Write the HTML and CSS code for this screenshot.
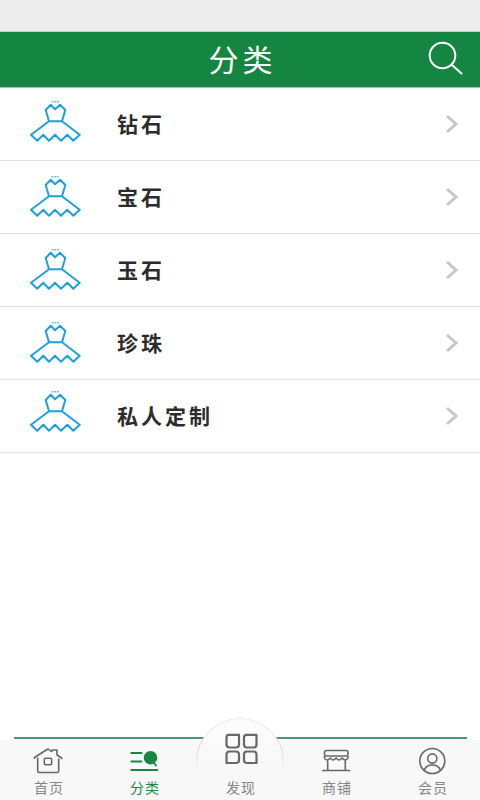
FILE: index.html
```
<!DOCTYPE html>
<html lang="zh-CN">
<head>
<meta charset="utf-8">
<title>分类</title>
<link rel="stylesheet" href="styles.css">
</head>
<body>
<svg width="0" height="0" class="defs">
  <symbol id="dress" viewBox="29 99 52 44"><path d="M49 121.3 45.7 110l5-5.3 4.3 4.6 5-4.6 5.3 5.3-3.3 11.3zL31 134.7l6.3 6 6-6 5.7 6 6-6 6 6 6.3-6 6 6 6.4-6L62 121.3"/><path class="beads" d="M51.5 101.800h7.500"/></symbol>
  <symbol id="chevron" viewBox="0 0 14 20"><path d="m2 2 9 8-9 8"/></symbol>
</svg>
<div class="app">
  <div class="status"></div>
  <header class="header">
    <h1>分类</h1>
    <svg class="search" viewBox="428 40 36 36"><circle cx="442.500" cy="55.500" r="12.800"/><path d="m451.500 64.500 10 9"/></svg>
  </header>
  <main class="list">
    <a class="row first"><svg class="dress"><use href="#dress"/></svg><span>钻石</span><svg class="chevron"><use href="#chevron"/></svg></a>
    <a class="row"><svg class="dress"><use href="#dress"/></svg><span>宝石</span><svg class="chevron"><use href="#chevron"/></svg></a>
    <a class="row"><svg class="dress"><use href="#dress"/></svg><span>玉石</span><svg class="chevron"><use href="#chevron"/></svg></a>
    <a class="row"><svg class="dress"><use href="#dress"/></svg><span>珍珠</span><svg class="chevron"><use href="#chevron"/></svg></a>
    <a class="row last"><svg class="dress"><use href="#dress"/></svg><span>私人定制</span><svg class="chevron"><use href="#chevron"/></svg></a>
  </main>
  <nav class="tabs">
    <div class="disc"></div>
    <a class="tab"><svg viewBox="32 745 32 32"><path d="M37.700 757.500V771q0 1.500 1.500 1.500h18q1.500 0 1.500-1.500v-12.500M34.500 759v-1.500L47 749.500q1-.6 2 0l2.500 2 1-1.500h4.500v5l4.700 3v1.300M45.800 758.300h4.400q1.500 0 1.500 1.500v3.400q0 1.500-1.500 1.500h-4.400q-1.500 0-1.500-1.500v-3.400q0-1.500 1.500-1.500z"/></svg><span>首页</span></a>
    <a class="tab active"><svg viewBox="128 745 32 32"><path d="M130.500 753h11.700M130.500 761.500h11.700M130.500 770H158M154 763l2.500 3.300"/><circle cx="150.500" cy="757.700" r="5.900" fill="currentColor"/></svg><span>分类</span></a>
    <a class="tab middle"><svg viewBox="225 733 33 33"><path d="M228.500 734.800H239v9.700q0 3-3 3h-6.500q-3 0-3-3v-6.700q0-3 2-3zM246.500 734.800H256.500v9.700q0 3-3 3h-6.500q-3 0-3-3v-6.700q0-3 2.500-3zM229.500 751.500h6.500q3 0 3 3v5.500q0 3-3 3h-9.500v-8.500q0-3 3-3zM247 751.500h6.500q3 0 3 3v8.500h-9.500q-3 0-3-3v-5.500q0-3 3-3z"/></svg><span>发现</span></a>
    <a class="tab"><svg viewBox="320 745 32 32"><rect x="324.500" y="750.500" width="23.500" height="5.500" rx="2"/><path d="M324.500 756v2q2 4 5.900 0 2 4 5.900 0 2 4 5.900 0 3 4 5.800 0v-2M327.700 760v10.500M345.300 760v10.500M323 771.500v-1h26.500v1"/></svg><span>商铺</span></a>
    <a class="tab"><svg viewBox="416 745 32 32"><circle cx="432.300" cy="761" r="12.500"/><circle cx="432.300" cy="758.500" r="4.600"/><path d="M424.300 770.300q1.500-5.300 8-5.300t8 5.300"/></svg><span>会员</span></a>
  </nav>
</div>
</body>
</html>
```
FILE: styles.css
```
* { box-sizing: border-box; }
body { margin: 0; background: #fff; font-family: "Noto Sans CJK SC", sans-serif; }
.defs { position: absolute; }
svg { fill: none; stroke: currentColor; flex: none; }
.app { width: 480px; height: 800px; display: flex; flex-direction: column; overflow: hidden; }
.status { height: 32px; background: #ececec; border-bottom: 1px solid #b5d9c2; }
.header { height: 56px; background: #158641; border-bottom: 1px solid #a9bcb0; color: #fff; display: grid; grid-template-columns: 1fr auto 1fr; align-items: center; }
h1 { grid-column: 2; margin: 0 0 2px 5px; font-size: 30px; line-height: 53px; font-weight: 400; letter-spacing: 4px; }
.search { width: 36px; height: 36px; justify-self: end; margin: 0 16px 3px 0; stroke-width: 2; stroke-linecap: round; }
.list { flex: 1; }
.row { height: 73px; display: flex; align-items: center; padding: 0 21px 0 29px; border-bottom: 1px solid #e0e0e0; }
.row span { flex: 1; margin: 0 0 2px 36px; font-size: 21px; font-weight: 700; letter-spacing: 3px; color: #2c2c2c; }
.dress { width: 52px; height: 44px; margin-bottom: 2px; color: #1da1db; stroke-width: 2; stroke-linejoin: round; }
.first .dress { margin-bottom: 6px; }
.last .dress { margin-bottom: 10px; }
.beads { stroke-width: 1.5; stroke-dasharray: 2 .7; opacity: .65; }
.chevron { width: 14px; height: 20px; color: #c6c6c6; stroke-width: 3; }
.tabs { position: relative; height: 60px; padding-bottom: 1px; display: grid; grid-template-columns: repeat(5, 1fr); background: #f8f8f8; color: #686868; }
.tabs::before { content: ""; position: absolute; left: 14px; right: 13px; top: -3px; height: 2px; background: #4c9872; }
.disc { position: absolute; left: 196px; top: -22px; width: 88px; height: 82px; border-radius: 44px 44px 0 0; background: linear-gradient(#fdfdfd, #f8f8f8 55%); }
.disc::before { content: ""; position: absolute; inset: 0 0 -6px; border-radius: 50%; border: 1.5px solid #d4d4d4; -webkit-mask-image: linear-gradient(rgba(0,0,0,.45), #000 38%, transparent 62%); mask-image: linear-gradient(rgba(0,0,0,.45), #000 38%, transparent 62%); }
.tab { position: relative; display: flex; flex-direction: column; align-items: center; padding-top: 5px; }
.tab svg { width: 32px; height: 32px; stroke-width: 1.6; stroke-linejoin: round; }
.tab span { font-size: 14px; line-height: 20px; letter-spacing: 1px; margin: 0 0 0 2px; color: #858585; }
.tab.active { color: #198744; }
.tab.active svg { stroke-width: 1.8; }
.tab.active span { color: #198744; }
.tab.middle { padding-top: 0; }
.tab.middle svg { width: 33px; height: 33px; margin: -7px 0 11px 3px; stroke-width: 2.2; }
```
